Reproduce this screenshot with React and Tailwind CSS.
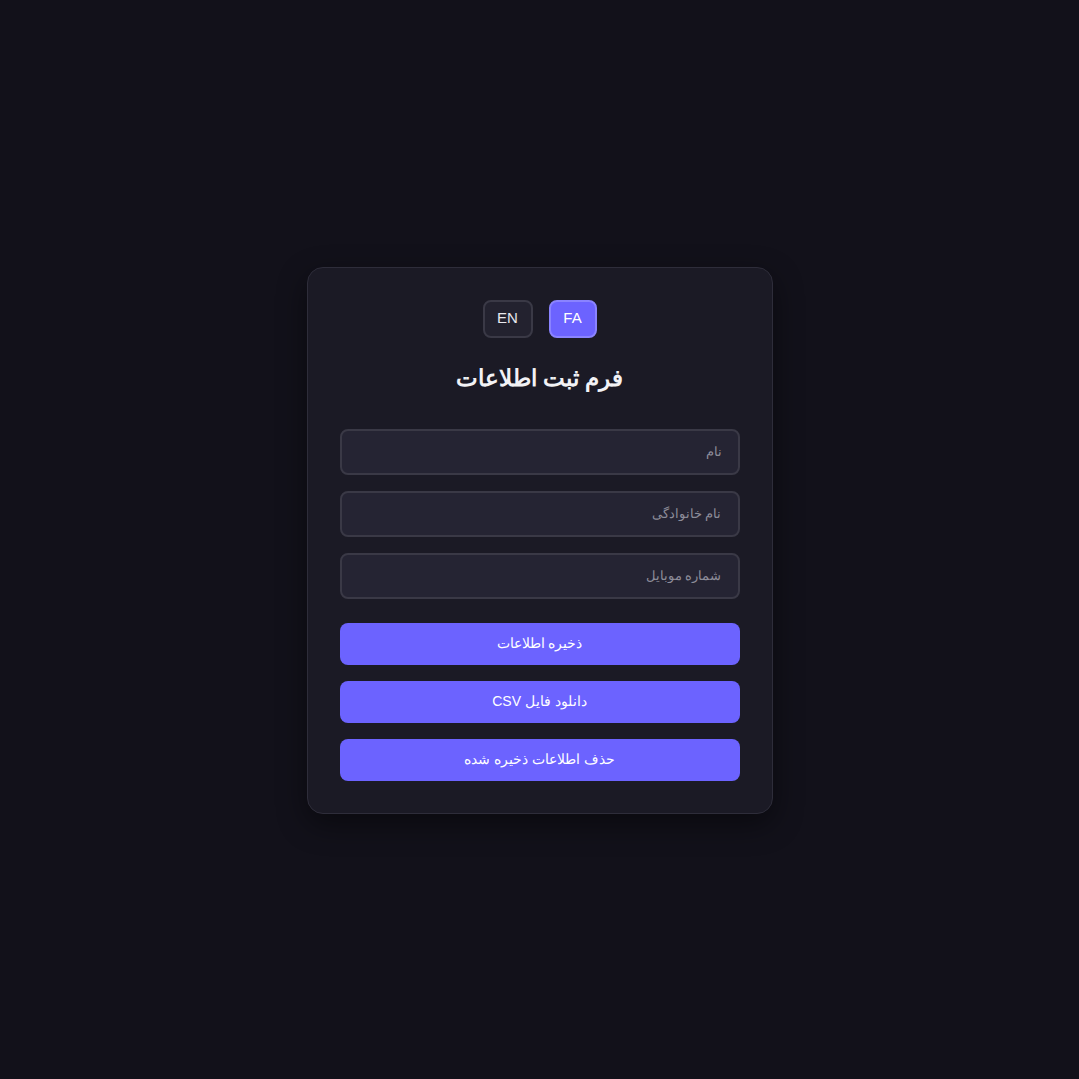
import { useState } from "react";

function App() {
  const [lang, setLang] = useState("fa");

  const fields = ["نام", "نام خانوادگی", "شماره موبایل"];
  const actions = ["ذخیره اطلاعات", "دانلود فایل CSV", "حذف اطلاعات ذخیره شده"];

  return (
    <div
      className="min-h-screen w-screen bg-[#12111a] flex items-center justify-center pt-px"
      style={{ fontFamily: '"Liberation Sans", "Noto Sans", sans-serif' }}
    >
      <div
        dir="rtl"
        className="w-[466px] bg-[#1b1a25] border border-[#2e2d3a] rounded-2xl p-8 shadow-[0_10px_30px_rgba(0,0,0,0.45)]"
      >
        {/* language switch */}
        <div dir="ltr" className="flex justify-center gap-4 h-[38px]">
          <button
            onClick={() => setLang("en")}
            className={`w-[50px] h-[38px] rounded-lg border-2 text-[15px] ${
              lang === "en"
                ? "bg-[#6c63ff] border-[#8a83ff] text-white"
                : "bg-[#23222f] border-[#3a3946] text-[#e8e8ee]"
            }`}
          >
            EN
          </button>
          <button
            onClick={() => setLang("fa")}
            className={`w-[48px] h-[38px] rounded-lg border-2 text-[15px] ${
              lang === "fa"
                ? "bg-[#6c63ff] border-[#8a83ff] text-white"
                : "bg-[#23222f] border-[#3a3946] text-[#e8e8ee]"
            }`}
          >
            FA
          </button>
        </div>

        <h1 className="mt-6 mb-[35px] h-8 leading-8 text-center text-[23px] font-bold text-[#f2f2f5]">
          فرم ثبت اطلاعات
        </h1>

        <div className="flex flex-col gap-4">
          {fields.map((f) => (
            <input
              key={f}
              type="text"
              placeholder={f}
              className="h-[46px] w-full rounded-lg border-2 border-[#3a3946] bg-[#252433] px-4 text-[13px] text-white placeholder:text-[#8d8c99] outline-none"
            />
          ))}
        </div>

        <div className="flex flex-col gap-4 mt-6">
          {actions.map((a) => (
            <button
              key={a}
              className="h-[42px] w-full rounded-lg bg-[#6c63ff] text-white text-[14px]"
            >
              {a}
            </button>
          ))}
        </div>
      </div>
    </div>
  );
}

export default App;
